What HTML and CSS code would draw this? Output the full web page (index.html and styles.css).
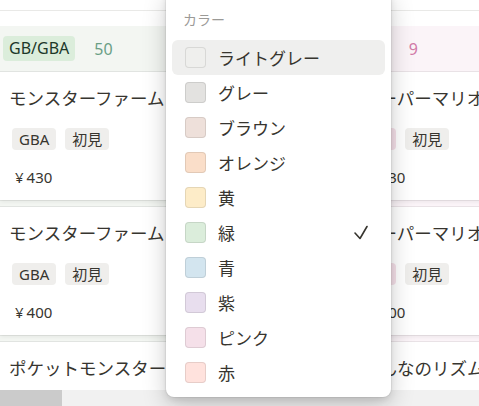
FILE: index.html
```html
<!DOCTYPE html>
<html lang="ja">
<head>
<meta charset="utf-8">
<title>Board</title>
<link rel="stylesheet" href="styles.css">
</head>
<body>
<div class="page">
  <div class="board">
    <div class="topbar"></div>
    <div class="columns">
      <div class="col col-green">
        <div class="col-head">
          <span class="group-tag tag-green">GB/GBA</span>
          <span class="count count-green">50</span>
        </div>
        <div class="cards">
          <div class="card">
            <div class="title">モンスターファーム２ 攻略本</div>
            <div class="tags"><span class="tag">GBA</span><span class="tag">初見</span></div>
            <div class="price"><span class="yen">¥</span>430</div>
          </div>
          <div class="card">
            <div class="title">モンスターファーム アドバンス</div>
            <div class="tags"><span class="tag">GBA</span><span class="tag">初見</span></div>
            <div class="price"><span class="yen">¥</span>400</div>
          </div>
          <div class="card">
            <div class="title">ポケットモンスター ルビー</div>
          </div>
        </div>
      </div>
      <div class="col col-pink">
        <div class="col-head">
          <span class="group-tag tag-pink">GC</span>
          <span class="count count-pink">9</span>
        </div>
        <div class="cards">
          <div class="card">
            <div class="title">スーパーマリオワールド</div>
            <div class="tags"><span class="tag tag-pk">FC</span><span class="tag">初見</span></div>
            <div class="price"><span class="yen">¥</span>330</div>
          </div>
          <div class="card">
            <div class="title">スーパーマリオカート</div>
            <div class="tags"><span class="tag tag-pk">FC</span><span class="tag">初見</span></div>
            <div class="price"><span class="yen">¥</span>300</div>
          </div>
          <div class="card">
            <div class="title">みんなのリズム天国</div>
          </div>
        </div>
      </div>
    </div>
  </div>
  <div class="hscroll"><div class="thumb"></div></div>

  <div class="menu">
    <div class="menu-head">カラー</div>
    <div class="item hover"><span class="sw sw-lightgray"></span><span class="label">ライトグレー</span></div>
    <div class="item"><span class="sw sw-gray"></span><span class="label">グレー</span></div>
    <div class="item"><span class="sw sw-brown"></span><span class="label">ブラウン</span></div>
    <div class="item"><span class="sw sw-orange"></span><span class="label">オレンジ</span></div>
    <div class="item"><span class="sw sw-yellow"></span><span class="label">黄</span></div>
    <div class="item"><span class="sw sw-green"></span><span class="label">緑</span>
      <svg class="check" viewBox="0 0 14 15" width="14" height="15"><polyline points="1,8 6,13.5 13,1.5" fill="none" stroke="#37352f" stroke-width="1.6" stroke-linecap="round" stroke-linejoin="round"/></svg>
    </div>
    <div class="item"><span class="sw sw-blue"></span><span class="label">青</span></div>
    <div class="item"><span class="sw sw-purple"></span><span class="label">紫</span></div>
    <div class="item"><span class="sw sw-pink"></span><span class="label">ピンク</span></div>
    <div class="item"><span class="sw sw-red"></span><span class="label">赤</span></div>
  </div>
</div>
</body>
</html>
```
FILE: styles.css
```css
* { box-sizing: border-box; }
html, body { margin: 0; padding: 0; background: #fff; }
body {
  font-family: "Noto Sans", "Noto Sans CJK JP", sans-serif;
  color: #37352f;
}
.page {
  position: relative;
  width: 479px;
  height: 406px;
  overflow: hidden;
  display: flex;
  flex-direction: column;
}
.board {
  height: 390px;
  overflow: hidden;
  flex: none;
}
.topbar {
  height: 11px;
  border-bottom: 1px solid #e9e9e7;
}
.columns {
  display: flex;
  gap: 16px;
  padding-top: 15px;
  width: 1000px;
}
.col {
  width: 337px;
  flex: none;
}
.col-green { background: #f3f6f2; }
.col-pink { background: #fbf4f8; }
.col-head {
  height: 45px;
  display: flex;
  align-items: center;
  padding-left: 3px;
  gap: 19px;
}
.group-tag {
  font-size: 16px;
  line-height: 25px;
  height: 25px;
  padding: 0 6px;
  border-radius: 4px;
}
.tag-green { background: #dbeddb; color: #1c3829; }
.tag-pink { background: #f5e0e9; color: #4c2337; }
.count { font-size: 16px; }
.count-green { color: #6a9f86; }
.count-pink { color: #d27aa8; }
.cards {
  display: flex;
  flex-direction: column;
  gap: 7px;
  padding-top: 1px;
}
.card {
  background: #fff;
  height: 128px;
  padding: 14px 0 13px;
  box-shadow: 0 0 0 1px rgba(15,15,15,0.07), 0 2px 4px rgba(15,15,15,0.06);
  overflow: hidden;
}
.title {
  font-size: 17.5px;
  line-height: 24px;
  padding-left: 9px;
  white-space: nowrap;
}
.tags {
  display: flex;
  gap: 9px;
  margin-top: 18px;
  padding-left: 12px;
}
.tag {
  font-size: 15px;
  line-height: 22px;
  height: 22px;
  padding: 0 7px;
  border-radius: 4px;
  background: #efeeec;
}
.tag-pk { background: #f5e0e9; }
.price {
  margin-top: 17px;
  font-size: 15px;
  line-height: 20px;
  padding-left: 15px;
}
.yen { margin-right: 3px; }
.hscroll {
  height: 16px;
  background: #f1f1f1;
  flex: none;
}
.thumb {
  width: 62px;
  height: 16px;
  background: #cbcbcb;
}
.menu {
  position: absolute;
  left: 166px;
  top: -10px;
  width: 225px;
  background: #fff;
  border-radius: 8px;
  padding: 10px 0 7px;
  box-shadow: 0 0 0 1px rgba(15,15,15,0.05), 0 3px 6px rgba(15,15,15,0.1), 0 9px 24px rgba(15,15,15,0.2);
}
.menu-head {
  height: 40px;
  line-height: 40px;
  padding-left: 17px;
  font-size: 14px;
  color: #9b9a97;
}
.item {
  height: 35px;
  margin: 0 6px;
  border-radius: 6px;
  display: flex;
  align-items: center;
  padding-left: 13px;
  gap: 12px;
  font-size: 17px;
  position: relative;
}
.item.hover { background: #efefee; }
.label { flex: 1; }
.check { margin-right: 17px; }
.sw {
  width: 21px;
  height: 21px;
  border-radius: 4px;
  box-shadow: inset 0 0 0 1px rgba(15,15,15,0.1);
  flex: none;
}
.sw-lightgray { background: #efefed; }
.sw-gray { background: #e3e2e0; }
.sw-brown { background: #eee0da; }
.sw-orange { background: #fadec9; }
.sw-yellow { background: #fdecc8; }
.sw-green { background: #dbeddb; }
.sw-blue { background: #d3e5ef; }
.sw-purple { background: #e8deee; }
.sw-pink { background: #f5e0e9; }
.sw-red { background: #ffe2dd; }
```
